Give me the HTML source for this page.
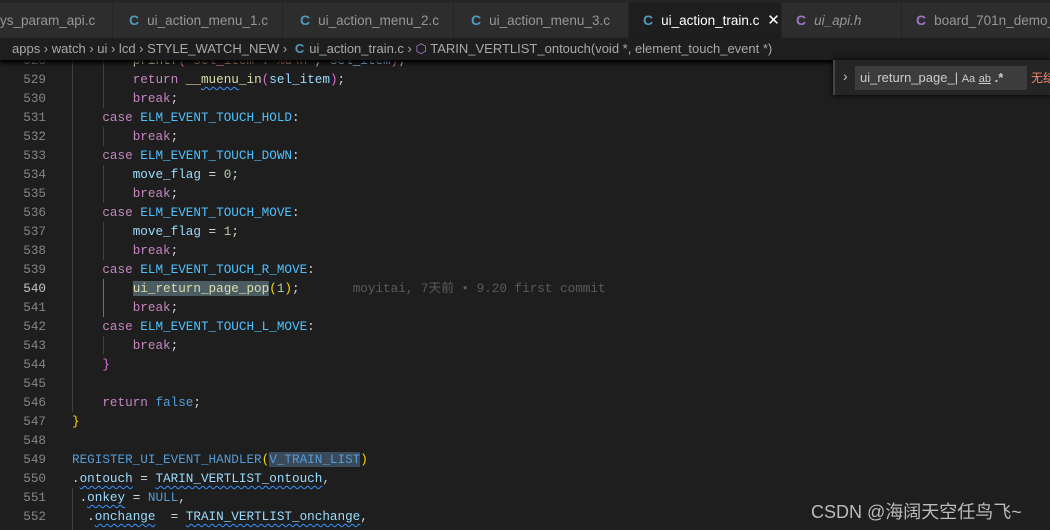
<!DOCTYPE html>
<html><head><meta charset="utf-8"><style>
*{margin:0;padding:0;box-sizing:border-box}
body{width:1050px;height:530px;overflow:hidden;background:#1e1e1e;position:relative;font-family:"Liberation Sans","Noto Sans CJK SC",sans-serif}
.tabs{position:absolute;left:0;top:0;width:1050px;height:38px;background:#252526}
.tab{position:absolute;top:3px;height:35px;background:#2d2d2d;color:#969696;font-size:13.5px;line-height:35px;white-space:nowrap;overflow:hidden;border-right:1px solid #252526}
.tab .c{font-weight:bold;color:#519aba;margin-right:8px;font-size:14px}
.tab.act{background:#1e1e1e;color:#fff}
.bc{position:absolute;left:0;top:38px;width:1050px;height:22px;background:#1e1e1e;color:#a9a9a9;font-size:13px;line-height:22px;white-space:nowrap;box-shadow:0 3px 4px #000;z-index:2}
.code{position:absolute;left:0;top:0;font-family:"Liberation Mono",monospace;font-size:12.65px}
.ln{position:absolute;left:0;width:46px;text-align:right;color:#858585;height:19px;line-height:19px}
.cl{position:absolute;left:72px;height:19px;line-height:19px;color:#d4d4d4;white-space:pre}
.k{color:#c586c0}.m{color:#4fc1ff}.v{color:#9cdcfe}.n{color:#b5cea8}.f{color:#dcdcaa}.b{color:#569cd6}.y{color:#ffd700}.p{color:#da70d6}.s{color:#ce9178}
.sq{text-decoration:underline wavy #3794ff;text-decoration-thickness:1px;text-underline-offset:3px}
.guide{position:absolute;width:1px;background:#404040}
.find{position:absolute;left:833px;top:60px;width:217px;height:35px;background:#252526;box-shadow:0 0 6px #000;border-left:2px solid #454545;z-index:3}
</style></head><body>
<div class="code">
<div class="guide" style="left:72px;top:60px;height:352px"></div>
<div class="guide" style="left:103px;top:60px;height:48px"></div>
<div class="guide" style="left:103px;top:127px;height:19px"></div>
<div class="guide" style="left:103px;top:165px;height:38px"></div>
<div class="guide" style="left:103px;top:222px;height:38px"></div>
<div class="guide" style="left:103px;top:279px;height:38px;background:#707070"></div>
<div class="guide" style="left:103px;top:336px;height:19px"></div>
<div class="guide" style="left:72px;top:488px;height:42px"></div>

<div class="ln" style="top:51px">528</div><div class="cl" style="top:51px">        <span class="f">printf</span><span class="p">(</span><span class="s">"sel_item : %d\n"</span>, <span class="v">sel_item</span><span class="p">)</span>;</div>
<div class="ln" style="top:70px">529</div><div class="cl" style="top:70px">        <span class="k">return</span> <span class="f">__<span class="sq">muenu</span>_in</span><span class="p">(</span><span class="v">sel_item</span><span class="p">)</span>;</div>
<div class="ln" style="top:89px">530</div><div class="cl" style="top:89px">        <span class="k">break</span>;</div>
<div class="ln" style="top:108px">531</div><div class="cl" style="top:108px">    <span class="k">case</span> <span class="m">ELM_EVENT_TOUCH_HOLD</span>:</div>
<div class="ln" style="top:127px">532</div><div class="cl" style="top:127px">        <span class="k">break</span>;</div>
<div class="ln" style="top:146px">533</div><div class="cl" style="top:146px">    <span class="k">case</span> <span class="m">ELM_EVENT_TOUCH_DOWN</span>:</div>
<div class="ln" style="top:165px">534</div><div class="cl" style="top:165px">        <span class="v">move_flag</span> = <span class="n">0</span>;</div>
<div class="ln" style="top:184px">535</div><div class="cl" style="top:184px">        <span class="k">break</span>;</div>
<div class="ln" style="top:203px">536</div><div class="cl" style="top:203px">    <span class="k">case</span> <span class="m">ELM_EVENT_TOUCH_MOVE</span>:</div>
<div class="ln" style="top:222px">537</div><div class="cl" style="top:222px">        <span class="v">move_flag</span> = <span class="n">1</span>;</div>
<div class="ln" style="top:241px">538</div><div class="cl" style="top:241px">        <span class="k">break</span>;</div>
<div class="ln" style="top:260px">539</div><div class="cl" style="top:260px">    <span class="k">case</span> <span class="m">ELM_EVENT_TOUCH_R_MOVE</span>:</div>
<div class="ln" style="top:279px;color:#c6c6c6">540</div><div class="cl" style="top:279px">        <span class="f" style="background:#4b5d63">ui_return_page_pop</span><span class="y">(</span><span class="n">1</span><span class="y">)</span>;       <span style="color:#5a5a5a;font-family:'Liberation Mono','Noto Sans CJK SC',monospace">moyitai, 7天前 • 9.20 first commit</span></div>
<div class="ln" style="top:298px">541</div><div class="cl" style="top:298px">        <span class="k">break</span>;</div>
<div class="ln" style="top:317px">542</div><div class="cl" style="top:317px">    <span class="k">case</span> <span class="m">ELM_EVENT_TOUCH_L_MOVE</span>:</div>
<div class="ln" style="top:336px">543</div><div class="cl" style="top:336px">        <span class="k">break</span>;</div>
<div class="ln" style="top:355px">544</div><div class="cl" style="top:355px">    <span class="p">}</span></div>
<div class="ln" style="top:374px">545</div>
<div class="ln" style="top:393px">546</div><div class="cl" style="top:393px">    <span class="k">return</span> <span class="b">false</span>;</div>
<div class="ln" style="top:412px">547</div><div class="cl" style="top:412px"><span class="y">}</span></div>
<div class="ln" style="top:431px">548</div>
<div class="ln" style="top:450px">549</div><div class="cl" style="top:450px"><span class="b">REGISTER_UI_EVENT_HANDLER</span><span class="y">(</span><span class="b" style="background:#3a4a5a">V_TRAIN_LIST</span><span class="y">)</span></div>
<div class="ln" style="top:469px">550</div><div class="cl" style="top:469px">.<span class="v sq">ontouch</span> = <span class="v sq">TARIN_VERTLIST_ontouch</span>,</div>
<div class="ln" style="top:488px">551</div><div class="cl" style="top:488px"> .<span class="v sq">onkey</span> = <span class="b">NULL</span>,</div>
<div class="ln" style="top:507px">552</div><div class="cl" style="top:507px">  .<span class="v sq">onchange</span>  = <span class="v sq">TRAIN_VERTLIST_onchange</span>,</div>
</div>

<div class="tabs">
<div class="tab" style="left:-6px;width:119px;padding-left:6px">ys_param_api.c</div>
<div class="tab" style="left:113px;width:170px;padding-left:16px"><span class="c">C</span>ui_action_menu_1.c</div>
<div class="tab" style="left:283px;width:171px;padding-left:17px"><span class="c">C</span>ui_action_menu_2.c</div>
<div class="tab" style="left:454px;width:175px;padding-left:17px"><span class="c">C</span>ui_action_menu_3.c</div>
<div class="tab act" style="left:629px;width:153px;padding-left:14px"><span class="c">C</span>ui_action_train.c <span style="margin-left:4px;font-size:15px">✕</span></div>
<div class="tab" style="left:782px;width:120px;padding-left:14px"><span class="c" style="color:#a074c4">C</span><i>ui_api.h</i></div>
<div class="tab" style="left:902px;width:160px;padding-left:14px"><span class="c" style="color:#a074c4">C</span>board_701n_demo_c</div>
</div>
<div class="bc"><span style="margin-left:12px">apps › watch › ui › lcd › STYLE_WATCH_NEW ›</span> <span style="color:#519aba;font-weight:bold;margin:0 5px 0 4px">C</span>ui_action_train.c › <span style="color:#b180d7">⬡</span> TARIN_VERTLIST_ontouch(void *, element_touch_event *)</div>
<div class="find">
<span style="position:absolute;left:8px;top:8px;color:#c5c5c5;font-size:14px">›</span>
<div style="position:absolute;left:20px;top:6px;width:172px;height:24px;background:#3c3c3c;color:#ccc;font-size:13px;line-height:24px;padding-left:5px;white-space:nowrap;overflow:hidden">ui_return_page_| <span style="font-size:11px">Aa</span> <span style="font-size:11px;text-decoration:underline">ab</span> <span style="font-size:13px;font-weight:bold">.*</span></div>
<span style="position:absolute;left:196px;top:9px;color:#f48771;font-size:12px;white-space:nowrap;font-family:'Noto Sans CJK SC',sans-serif">无结果</span>
</div>
<div style="position:absolute;left:811px;top:498px;color:#bbb;font-size:18px;white-space:nowrap;font-family:'Liberation Sans','Noto Sans CJK SC',sans-serif">CSDN @海阔天空任鸟飞~</div>
</body></html>
